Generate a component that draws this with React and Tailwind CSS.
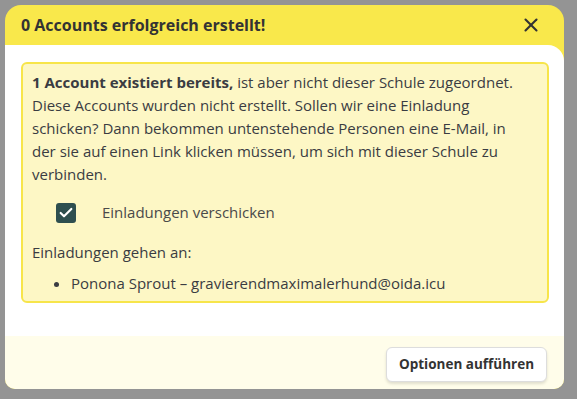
import { X, Check } from 'lucide-react'

export default function App() {
  return (
    <div
      className="w-[577px] h-[399px] bg-[#949494] pt-[5px] pl-[5px] overflow-hidden"
      style={{ fontFamily: '"Open Sans", "Noto Sans", sans-serif' }}
    >
      <div className="w-[559px] h-[384px] flex flex-col bg-[#f9e84b] rounded-t-[16px] rounded-b-[10px] overflow-hidden">
        {/* Header */}
        <div className="h-[40px] shrink-0 flex items-center justify-between pl-4 pr-[22px]">
          <h2 className="text-[16px] font-bold text-[#333333]">0 Accounts erfolgreich erstellt!</h2>
          <X size={22} strokeWidth={2.3} className="text-[#333333]" />
        </div>

        {/* Body */}
        <div className="bg-white rounded-tr-[16px] pt-[17px] pl-4 pr-[15px] pb-[33px]">
          <div className="border-2 border-[#f7e54a] bg-[#fdf7c5] rounded-md pl-[9px] pr-3 pt-[7px] pb-[6px] text-[15px] leading-[23px] text-[#3a3c42]">
            <p>
              <span className="font-bold">1 Account existiert bereits,</span> ist aber nicht dieser Schule zugeordnet.
              <br />
              Diese Accounts wurden nicht erstellt. Sollen wir eine Einladung
              <br />
              schicken? Dann bekommen untenstehende Personen eine E-Mail, in
              <br />
              der sie auf einen Link klicken müssen, um sich mit dieser Schule zu
              <br />
              verbinden.
            </p>

            <label className="flex items-center mt-[15px] pl-[24px] gap-[26px]">
              <span className="w-5 h-5 rounded-[3px] bg-[#2e4f4f] flex items-center justify-center">
                <Check size={16} strokeWidth={3.2} className="text-white" />
              </span>
              <span className="text-[#4a4a4a]">Einladungen verschicken</span>
            </label>

            <p className="mt-[17px]">Einladungen gehen an:</p>

            <ul className="mt-2 list-disc pl-[39px]">
              <li>Ponona Sprout – gravierendmaximalerhund@oida.icu</li>
            </ul>
          </div>
        </div>

        {/* Footer */}
        <div className="flex-1 bg-[#fffdea] flex justify-end items-start pt-[11px] pr-[17px]">
          <button className="h-[35px] w-[161px] bg-white border border-[#dddddd] rounded-md shadow-[0_2px_3px_rgba(0,0,0,0.12)] text-[13.5px] font-bold text-[#333333]">
            Optionen aufführen
          </button>
        </div>
      </div>
    </div>
  )
}
